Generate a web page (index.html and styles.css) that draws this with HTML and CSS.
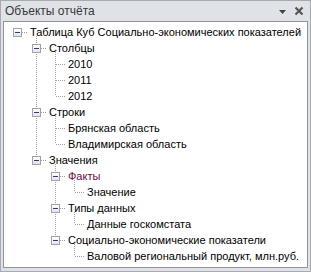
FILE: index.html
```html
<!DOCTYPE html>
<html lang="ru">
<head>
    <meta charset="UTF-8">
    <title>Объекты отчёта</title>
    <link rel="stylesheet" href="styles.css">
</head>
<body>
    <div class="panel">
        <div class="panel-header">
            <span class="panel-title">Объекты отчёта</span>
            <span class="panel-tools">
                <svg class="tool" width="9" height="9" viewBox="0 0 9 9"><path d="M1 3h7L4.5 7z" fill="#444"/></svg>
                <svg class="tool" width="10" height="10" viewBox="0 0 10 10"><path d="M1.5 1.5l7 7M8.5 1.5l-7 7" stroke="#555" stroke-width="2.2"/></svg>
            </span>
        </div>
        <div class="tree">
            <ul class="root">
                <li>
                    <div class="row"><span class="tw"><i class="box"></i></span><span class="label">Таблица Куб Социально-экономических показателей</span></div>
                    <ul class="children">
                        <li>
                            <div class="row"><span class="tw"><i class="box"></i></span><span class="label">Столбцы</span></div>
                            <ul class="children">
                                <li><div class="row"><span class="tw leaf"></span><span class="label">2010</span></div></li>
                                <li><div class="row"><span class="tw leaf"></span><span class="label">2011</span></div></li>
                                <li><div class="row"><span class="tw leaf"></span><span class="label">2012</span></div></li>
                            </ul>
                        </li>
                        <li>
                            <div class="row"><span class="tw"><i class="box"></i></span><span class="label">Строки</span></div>
                            <ul class="children">
                                <li><div class="row"><span class="tw leaf"></span><span class="label">Брянская область</span></div></li>
                                <li><div class="row"><span class="tw leaf"></span><span class="label">Владимирская область</span></div></li>
                            </ul>
                        </li>
                        <li>
                            <div class="row"><span class="tw"><i class="box"></i></span><span class="label">Значения</span></div>
                            <ul class="children">
                                <li>
                                    <div class="row"><span class="tw"><i class="box"></i></span><span class="label fact">Факты</span></div>
                                    <ul class="children">
                                        <li><div class="row"><span class="tw leaf"></span><span class="label">Значение</span></div></li>
                                    </ul>
                                </li>
                                <li>
                                    <div class="row"><span class="tw"><i class="box"></i></span><span class="label">Типы данных</span></div>
                                    <ul class="children">
                                        <li><div class="row"><span class="tw leaf"></span><span class="label">Данные госкомстата</span></div></li>
                                    </ul>
                                </li>
                                <li>
                                    <div class="row"><span class="tw"><i class="box"></i></span><span class="label">Социально-экономические показатели</span></div>
                                    <ul class="children">
                                        <li><div class="row"><span class="tw leaf"></span><span class="label">Валовой региональный продукт, млн.руб.</span></div></li>
                                    </ul>
                                </li>
                            </ul>
                        </li>
                    </ul>
                </li>
            </ul>
        </div>
    </div>
</body>
</html>
```

FILE: styles.css
```css
* {
    margin: 0;
    padding: 0;
    box-sizing: border-box;
}

body {
    font-family: "Liberation Sans", Arial, sans-serif;
    font-size: 11px;
    background-color: #fff;
}

.panel {
    width: 311px;
    height: 272px;
    background-color: #dfe2e7;
    border: 1px solid #a6aab1;
    display: flex;
    flex-direction: column;
}

.panel-header {
    height: 20px;
    display: flex;
    align-items: center;
    padding: 0 6px 0 4px;
    color: #3a3a3a;
    font-size: 12px;
}

.panel-title {
    margin-right: auto;
}

.panel-tools {
    display: flex;
    align-items: center;
    gap: 7px;
}

.tree {
    flex: 1;
    margin: 0 2px 3px 2px;
    background-color: #fff;
    border: 1px solid #8f949c;
    padding: 2px 0 0 5px;
    color: #000;
    overflow: hidden;
}

ul {
    list-style: none;
}

.children {
    margin-left: 19px;
}

li {
    position: relative;
}

/* вертикальные пунктирные линии дерева */
.children > li::before {
    content: '';
    position: absolute;
    left: 8px;
    top: 0;
    bottom: 0;
    width: 1px;
    background: repeating-linear-gradient(to bottom, #a0a0a0 0 1px, transparent 1px 2px);
}

.children > li:first-child::before {
    top: -4px;
}

.children > li:last-child::before {
    bottom: auto;
    height: 8px;
}

.children > li:first-child:last-child::before {
    height: 12px;
}

.row {
    display: flex;
    align-items: center;
    height: 16px;
    white-space: nowrap;
}

.tw {
    position: relative;
    width: 19px;
    height: 16px;
    flex-shrink: 0;
}

/* горизонтальная линия к тексту */
.tw::after {
    content: '';
    position: absolute;
    left: 9px;
    right: 1px;
    top: 8px;
    height: 1px;
    background: repeating-linear-gradient(to right, #a0a0a0 0 1px, transparent 1px 2px);
}

.tw .box {
    position: absolute;
    left: 4px;
    top: 4px;
    width: 9px;
    height: 9px;
    border: 1px solid #a3a3a3;
    background: linear-gradient(#fff, #e4e4e4);
    z-index: 1;
}

.tw .box::after {
    content: '';
    position: absolute;
    left: 1px;
    top: 3px;
    width: 5px;
    height: 1px;
    background-color: #2f3f5f;
}

.tw:not(.leaf)::after {
    left: 13px;
}

.label {
    padding-left: 2px;
}

.fact {
    color: #6e0a46;
}
```
